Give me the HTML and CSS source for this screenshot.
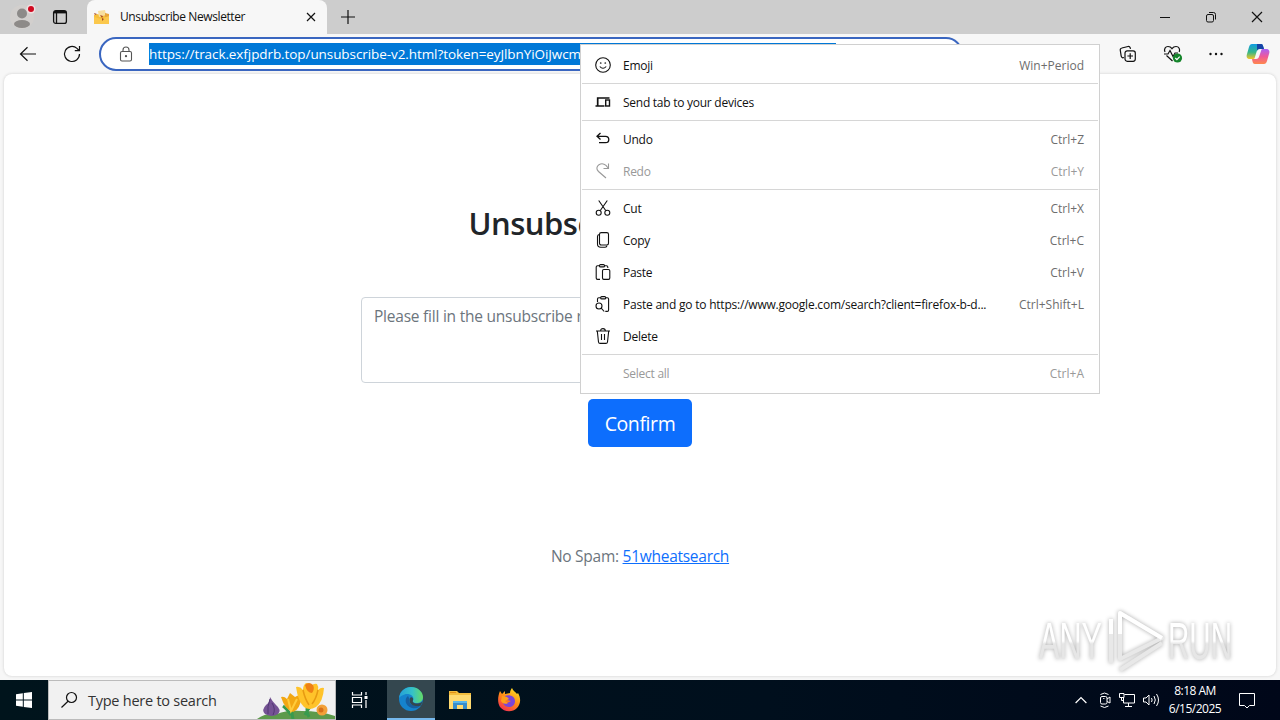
FILE: index.html
```html
<!DOCTYPE html>
<html lang="en">
<head>
  <meta charset="UTF-8" />
  <meta name="viewport" content="width=device-width, initial-scale=1.0" />
  <title>Unsubscribe Newsletter</title>
  <link rel="stylesheet" href="styles.css">
</head>
<body>
  <div class="desktop">
    <header class="tabstrip">
      <svg class="profile" width="24" height="24" viewBox="0 0 24 24">
        <circle cx="12" cy="12" r="12" fill="#d2cfcd"/>
        <circle cx="12" cy="8.500" r="5" fill="#8d8a88"/>
        <ellipse cx="12" cy="19" rx="8" ry="4" fill="#8d8a88"/>
        <circle cx="21" cy="4" r="4.500" fill="#f0dfdf"/>
        <circle cx="21" cy="4" r="3" fill="#d00a20"/>
      </svg>
      <svg class="workspaces" width="16" height="16" viewBox="0 0 16 16" fill="none" stroke="#111" stroke-width="1.300">
        <rect x="1.600" y="1.600" width="12.800" height="12.800" rx="2.200"/>
        <path d="M2 3.200h12" stroke-width="2.400"/><path d="M4.500 4v10"/>
      </svg>
      <div class="tab">
        <svg width="18" height="16" viewBox="0 0 18 16">
          <path d="M1 6l3-1 4 1h8v9H1z" fill="#f5bf3c"/>
          <path d="M5 2l7-1 1 5-7 2z" fill="#f8dfa0"/>
          <path d="M12 4l4 1v3h-4z" fill="#e9a63c"/>
          <path d="M1 8l7 2 8-3v8H1z" fill="#fbc84c"/>
          <path d="M7 6l3 1-1 2zM9 9l2 1-2 2zM1 4l3 1-2 1z" fill="#a84826"/>
        </svg>
        <span class="tab-title">Unsubscribe Newsletter</span>
        <svg class="tab-close" width="10" height="10" viewBox="0 0 10 10" stroke="#111" stroke-width="1.200"><path d="M1 1l8 8M9 1L1 9"/></svg>
      </div>
      <svg class="new-tab" width="14" height="14" viewBox="0 0 14 14" stroke="#111" stroke-width="1.200"><path d="M7 0v14M0 7h14"/></svg>
      <div class="window-buttons">
        <svg width="12" height="12" viewBox="0 0 12 12" fill="none" stroke="#111"><path d="M1 6.500h10"/></svg>
        <svg width="12" height="12" viewBox="0 0 12 12" fill="none" stroke="#111"><rect x="1.500" y="3.500" width="7" height="7.500" rx="1.500"/><path d="M4 1.500h4.500a2 2 0 0 1 2 2V8.500"/></svg>
        <svg width="12" height="12" viewBox="0 0 12 12" fill="none" stroke="#111" stroke-width="1.200"><path d="M1 1l10 10M11 1L1 11"/></svg>
      </div>
    </header>

    <div class="toolbar">
      <svg class="back" width="18" height="16" viewBox="0 0 18 16" fill="none" stroke="#111" stroke-width="1.200"><path d="M17 8H1.500M8.500 1.200L1.500 8l7 6.800"/></svg>
      <svg class="reload" width="18" height="18" viewBox="0 0 18 18" fill="none" stroke="#111" stroke-width="1.200"><path d="M16.500 9A7.500 7.500 0 1 1 14 3.400l2 2.100M16.500 1v4.700h-4.700"/></svg>
      <div class="address">
        <svg width="14" height="16" viewBox="0 0 14 16" fill="none" stroke="#555" stroke-width="1.100"><rect x="1.500" y="5.500" width="11" height="9.500" rx="1.500"/><path d="M4 5.500V4a3 3 0 0 1 6 0v1.500"/><circle cx="7" cy="10.200" r=".6" fill="#444"/></svg>
        <span class="url">https://track.exfjpdrb.top/unsubscribe-v2.html?token=eyJlbnYiOiJwcm</span>
      </div>
      <div class="toolbar-actions">
        <svg width="18" height="18" viewBox="0 0 18 18" fill="none" stroke="#111" stroke-width="1.200">
          <path d="M5 12.500l-1.300.3a2 2 0 0 1-1.500-1.600L1.300 5.500A2 2 0 0 1 2.900 3L9 1.500a2 2 0 0 1 2.200 1.300l.3 1"/>
          <rect x="6" y="5.800" width="10.300" height="10.500" rx="2.200"/><path d="M11.200 8.300v5.600M8.400 11h5.600"/>
        </svg>
        <svg width="20" height="18" viewBox="0 0 20 18" fill="none" stroke="#111" stroke-width="1.200">
          <path d="M2 7C.6 4 2.500 1.500 5 1.500c2 0 3.200 1 4 2.200C10 2.300 11.300 1.500 13 1.500c3 0 4.300 3 3.200 5.500M3.500 10.500l6 5.500M1 9h4l2-3.500 3 6L12 8h3"/>
          <circle cx="14.500" cy="13" r="4.600" fill="#15852b" stroke="none"/><path d="M12.300 13l1.600 1.600 2.800-3" stroke="#fff"/>
        </svg>
        <svg width="14" height="4" viewBox="0 0 14 4" fill="#111"><circle cx="1.500" cy="2" r="1.200"/><circle cx="7" cy="2" r="1.200"/><circle cx="12.500" cy="2" r="1.200"/></svg>
        <svg class="copilot" width="24" height="22" viewBox="0 0 24 22">
          <defs>
            <linearGradient id="cool" x2="0" y2="1"><stop stop-color="#109ce3"/><stop offset=".55" stop-color="#36b788"/><stop offset="1" stop-color="#f5c525"/></linearGradient>
            <linearGradient id="warm" x2="0" y2="1"><stop stop-color="#aa61f5"/><stop offset=".5" stop-color="#ef5999"/><stop offset="1" stop-color="#ff884c"/></linearGradient>
          </defs>
          <path d="M6 1h9c2 0 2 2 3 5h-4c-2 0-3 1-3.500 3L9 14c-.5 2-1 2-3 2H4c-3 0-4-2-3-5l2-7c.6-2 1.500-3 3-3z" fill="url(#cool)"/>
          <path d="M18 21H9c-2 0-2.500-2-3-5h4c2 0 2.700-1 3.300-3L15 8c.5-2 1-2 3-2h2c3 0 4 2 3 5l-2 7c-.6 2-1.500 3-3 3z" fill="url(#warm)"/>
          <path d="M11 1h4c2 0 2 2 3 5h-4c-2 0-2.500.5-3 2z" fill="#1743a7"/>
        </svg>
      </div>
    </div>

    <main class="page">
      <h1>Unsubscribe Newsletter</h1>
      <div class="reason">Please fill in the unsubscribe reason</div>
      <button class="confirm">Confirm</button>
      <p class="note">No Spam: <a href="#">51wheatsearch</a></p>
    </main>

    <footer class="taskbar">
      <div class="start">
        <svg width="16" height="16" viewBox="0 0 16 16" fill="#fff"><path d="M0 2.200l6.800-1v6.300H0zM7.800 1L16 0v7.500H7.800zM0 8.500h6.800v6.300l-6.800-1zM7.800 8.500H16V16l-8.200-1z"/></svg>
      </div>
      <div class="search">
        <svg width="18" height="18" viewBox="0 0 18 18" fill="none" stroke="#111" stroke-width="1.200"><circle cx="10.500" cy="6.500" r="5"/><path d="M7 10.300L.5 16.500"/></svg>
        <span>Type here to search</span>
        <svg class="flowers" width="80" height="38" viewBox="0 0 80 38">
          <path d="M2 38q8-6 20-5 10-4 25-3 18 0 33 5v3z" fill="#5d9a4b"/>
          <path d="M38 38q-2-8 0-13M54 36q-4-8 0-14M50 34q6-12 12-14M36 34q-5-7-8-9" stroke="#389a4e" stroke-width="3" fill="none"/>
          <path d="M15 16q2 4 6 8 6 5 2 9-6 4-13 0-4-4 1-9 4-3 4-8z" fill="#755394"/>
          <path d="M15 18q-3 8-2 15M17 22q4 6 1 12" stroke="#533875" fill="none"/>
          <path d="M26 16q3-1 6 2l3-6 5 4q4-3 7-1-2 14-9 16-8-2-12-15z" fill="#f2a713"/>
          <path d="M33 18l3 12 6-12" stroke="#ffcb3a" stroke-width="2" fill="none"/>
          <path d="M41 6q4-1 7 3 0-5 3-7 4 0 5 3 3-3 6-2 2 3 1 6 3-3 6-2-1 14-8 19-7 4-12 0-6-6-8-20z" fill="#ffc32a"/>
          <path d="M48 9q2 9 6 15M63 9q-2 9-6 14" stroke="#e79a12" stroke-width="1.500" fill="none"/>
          <path d="M50 4q4-4 8 0 2 4-1 8-5 0-7-8z" fill="#ee8015"/>
          <circle cx="67" cy="29" r="5.500" fill="#f2a039"/><circle cx="66" cy="29" r="2.500" fill="#d77019"/>
        </svg>
      </div>
      <div class="app task-view">
        <svg width="18" height="18" viewBox="0 0 18 18" fill="none" stroke="#fff" stroke-width="1.200"><path d="M1.500 1v3h9V1M1.500 17v-3h9v3M1.500 6.500h9v5h-9zM15 1v3M15 9v8"/><path d="M13.500 6.500h3" stroke-width="3"/></svg>
      </div>
      <div class="app active">
        <svg width="24" height="24" viewBox="0 0 24 24">
          <defs><linearGradient id="wave"><stop stop-color="#249fd8"/><stop offset=".55" stop-color="#35c1c9"/><stop offset="1" stop-color="#65dc65"/></linearGradient></defs>
          <circle cx="12" cy="12" r="12" fill="#1583cd"/>
          <path d="M0 11C1 4 6 0 12 0c7 0 12 5 12 10 0 4-3 6-6.500 6-3 0-4.500-1-3.500-2.700C16 9 10 6 5.500 7.500 3 8.300 1 9.500 0 11z" fill="url(#wave)"/>
          <path d="M9 9c-4 3-3 10 4 12 4 1 7-.5 9-3-5 2-13 .5-12-7z" fill="#175e9f"/>
          <path d="M14 13.300c-1 2 1 3.200 4 3.200 3 0 5-1 6-3l-2 5c-5 1.500-12 0-11.500-6 .2-2 1.500-2.500 2.500-2 1.200.5 1.500 1.700 1 2.800z" fill="#34474f"/>
        </svg>
      </div>
      <div class="app">
        <svg width="22" height="20" viewBox="0 0 22 20"><path d="M0 1h8l2 2h12v16H0z" fill="#f3bd3d"/><path d="M0 5h22v14H0z" fill="#ffda70"/><path d="M1 2h6v1H1z" fill="#e29116"/><path d="M4 19v-8h14v8h-4v-4H8v4z" fill="#378dcb"/><path d="M4 11h14v2H4z" fill="#57b6ec"/></svg>
      </div>
      <div class="app">
        <svg width="24" height="24" viewBox="0 0 24 24">
          <defs><linearGradient id="fire" x1=".8" y1="0" x2=".2" y2="1"><stop stop-color="#ffe226"/><stop offset=".5" stop-color="#ff8a16"/><stop offset="1" stop-color="#f32856"/></linearGradient></defs>
          <path d="M3 3l2 3 3-3v3l5-1c0-2 1-4 2-5 1 3 4 4 5 6l1-1c3 5 3 11-1 15-5 5-13 4-17-1C0 14 1 8 3 3z" fill="url(#fire)"/>
          <path d="M8 8c4-2 10 0 10 5 0 4-3 6-6 6-4 0-6-3-6-5l4 1 4-2-4-1z" fill="#7b45d7"/>
          <path d="M5 8l5 1 2 2-4 2 3 2c-3 2-6 0-7-2z" fill="#ff9f1a"/>
        </svg>
      </div>
      <div class="tray">
        <svg class="caret" width="12" height="8" viewBox="0 0 12 8" fill="none" stroke="#fff" stroke-width="1.200"><path d="M.6 7L6 1.500 11.400 7"/></svg>
        <svg width="12" height="16" viewBox="0 0 12 16" fill="none" stroke="#fff"><rect x="1.500" y="4.500" width="6.500" height="7.500" rx="1.500"/><path d="M8 7l3-2v6L8 9.500M1.500 2.500Q5.500-.5 9.500 2.500M1.500 14Q5.500 17 9.500 14"/><path d="M4 6.500h1.500" stroke-width=".8"/></svg>
        <svg width="16" height="16" viewBox="0 0 16 16" fill="none" stroke="#fff"><path d="M5.500 2.500h10v8.500H4.500V6M9.500 11v3M6 14.500h7M.5 1.500h4.500v4H.5zM2.500 5.500v3h2"/></svg>
        <svg width="17" height="14" viewBox="0 0 17 14" fill="none" stroke="#fff"><path d="M.5 5h2.500l3-3v10L3 9H.5zM8.500 5q1.300 2 0 4M11 3q2.600 4 0 8M13.500 1q4 6 0 12"/></svg>
        <div class="clock"><span>8:18 AM</span><span>6/15/2025</span></div>
        <svg class="notice" width="16" height="16" viewBox="0 0 16 16" fill="none" stroke="#fff"><path d="M.5.500h15v12h-5L8 15l-2.500-2.500h-5z"/></svg>
      </div>
    </footer>

    <div class="context-menu">
      <div class="item">
        <svg viewBox="0 0 16 16"><circle cx="8" cy="8" r="7.300"/><path d="M4.800 9.500q3.200 3.600 6.400 0"/><circle cx="5.700" cy="6" r=".3"/><circle cx="10.300" cy="6" r=".3"/></svg>
        <span>Emoji</span><kbd>Win+Period</kbd>
      </div>
      <hr>
      <div class="item">
        <svg viewBox="0 0 16 16"><path d="M2.700 11.500V4h11.800M.5 12h9" stroke-width="1.700"/><rect x="10.700" y="6" width="3.800" height="6" stroke-width="1.400"/></svg>
        <span>Send tab to your devices</span>
      </div>
      <hr>
      <div class="item">
        <svg viewBox="0 0 16 16"><path d="M5.500 2L2 5.300l3.500 3.200M2 5.300h8.500q3.300 0 3.300 3.200t-3.300 3.200H4" stroke-width="1.300"/></svg>
        <span>Undo</span><kbd>Ctrl+Z</kbd>
      </div>
      <div class="item disabled">
        <svg viewBox="0 0 16 16"><path d="M13.500.5v5H8.500M13.500 5.500L11 2.400Q7.500-.6 4 1.700 0 5 3.500 8.500L11 15"/></svg>
        <span>Redo</span><kbd>Ctrl+Y</kbd>
      </div>
      <hr>
      <div class="item">
        <svg viewBox="0 0 16 16"><circle cx="3.700" cy="12.700" r="2.500"/><circle cx="12.300" cy="12.700" r="2.500"/><path d="M3.700.5l7 10M12.300.5l-7 10"/></svg>
        <span>Cut</span><kbd>Ctrl+X</kbd>
      </div>
      <div class="item">
        <svg viewBox="0 0 16 16"><rect x="4.500" y=".6" width="9" height="12.400" rx="1.700"/><path d="M4.300 2.500Q2.500 2.600 2.500 4.500V12q0 3.200 3.200 3.200h4.500q1.500 0 1.800-1.500"/></svg>
        <span>Copy</span><kbd>Ctrl+C</kbd>
      </div>
      <div class="item">
        <svg viewBox="0 0 16 16"><path d="M5 15.400H2.500q-1.300 0-1.300-1.300V3q0-1.300 1.300-1.300h2M9.500 1.700h2q1.300 0 1.300 1.300v1"/><rect x="4.500" y=".6" width="5" height="2.300" rx="1"/><rect x="7.500" y="5.500" width="7.300" height="9.900" rx="1.300"/></svg>
        <span>Paste</span><kbd>Ctrl+V</kbd>
      </div>
      <div class="item">
        <svg viewBox="0 0 16 16"><path d="M2.500 6V3q0-1.300 1.300-1.300h2M10.800 1.700h1.500q1.300 0 1.300 1.300v11q0 1.400-1.300 1.400h-2"/><rect x="5.700" y=".6" width="5" height="2.300" rx="1"/><circle cx="4" cy="10" r="3"/><path d="M6.200 12.200l3 3.300"/></svg>
        <span class="paste-url">Paste and go to https://www.google.com/search?client=firefox-b-d...</span><kbd>Ctrl+Shift+L</kbd>
      </div>
      <div class="item">
        <svg viewBox="0 0 16 16"><path d="M1 3h14M5.700 2.800q0-2.200 2.300-2.200t2.300 2.200M2.300 3l1.200 11q.2 1.400 1.600 1.400h5.800q1.400 0 1.600-1.400L13.700 3M6.500 6v6M9.500 6v6"/></svg>
        <span>Delete</span>
      </div>
      <hr>
      <div class="item disabled">
        <svg viewBox="0 0 16 16"></svg>
        <span>Select all</span><kbd>Ctrl+A</kbd>
      </div>
    </div>

    <svg class="watermark" width="204" height="72" viewBox="0 0 204 72">
      <defs><linearGradient id="fade" x2="0" y2="1"><stop offset=".5" stop-color="#fff"/><stop offset=".55" stop-color="#e6e6e6"/></linearGradient></defs>
      <g fill="url(#fade)">
        <text x="5" y="55" textLength="63" lengthAdjust="spacingAndGlyphs">ANY</text>
        <text x="134" y="55" textLength="64" lengthAdjust="spacingAndGlyphs">RUN</text>
      </g>
      <g fill="none" stroke-linejoin="round" stroke="#fff" stroke-width="4">
        <path d="M77 15v44M86 9v46l42-21zM86 66l42-27" stroke="#e8e8e8"/>
        <path d="M77 30V15M86 30V9l42 25"/>
      </g>
    </svg>
  </div>
</body>
</html>
```
FILE: styles.css
```css
* {
  box-sizing: border-box;
}
body {
  margin: 0;
  font-family: "Open Sans", "Noto Sans", sans-serif;
  color: #111;
}
svg {
  flex: none;
  overflow: visible;
}
.desktop {
  position: relative;
  width: 1280px;
  height: 720px;
  overflow: hidden;
  display: flex;
  flex-direction: column;
  background: #f7f7f7;
}

/* browser frame */
.tabstrip {
  height: 34px;
  display: flex;
  align-items: center;
  background: #cdcdcd;
  padding-left: 10px;
}
.workspaces {
  margin-left: 18px;
}
.tab {
  width: 240px;
  height: 34px;
  margin-left: 19px;
  padding: 0 11px 0 6px;
  display: flex;
  align-items: center;
  background: #f7f7f7;
  border-radius: 8px 8px 0 0;
}
.tab-title {
  margin: -1px 0 0 9px;
  font-size: 12px;
  letter-spacing: -0.4px;
  white-space: nowrap;
}
.tab-close {
  margin-left: auto;
}
.new-tab {
  margin-left: 14px;
}
.window-buttons {
  margin: 0 17px 0 auto;
  display: flex;
  gap: 34px;
}
.toolbar {
  height: 40px;
  display: flex;
  align-items: center;
  padding: 0 10px 0 19px;
}
.reload {
  margin-left: 26px;
}
.address {
  width: 864px;
  height: 34px;
  margin-left: 18px;
  padding-left: 18px;
  display: flex;
  align-items: center;
  background: #fff;
  border: 2px solid #3a66c0;
  border-radius: 17px;
}
.url {
  width: 687px;
  height: 22px;
  margin-left: 16px;
  background: #0078d7;
  color: #fff;
  font-size: 13.5px;
  line-height: 22px;
  letter-spacing: -0.08px;
  white-space: nowrap;
}
.toolbar-actions {
  margin-left: auto;
  display: flex;
  align-items: center;
  gap: 26px;
}
.copilot {
  margin-left: -3px;
}

/* unsubscribe form */
.page {
  height: 602px;
  margin: 0 4px;
  display: flex;
  flex-direction: column;
  align-items: center;
  background: #fff;
  border-radius: 8px;
  box-shadow: 0 0 3px #ccc;
}
h1 {
  width: 343px;
  margin: 130px 0 0;
  color: #212529;
  font-size: 31px;
  font-weight: 600;
  line-height: 38px;
  letter-spacing: -0.5px;
  white-space: nowrap;
}
.reason {
  width: 558px;
  height: 86px;
  margin-top: 55px;
  padding: 6px 12px;
  border: 1px solid #ced4da;
  border-radius: 4px;
  color: #6c757d;
  font-size: 15.5px;
  line-height: 24px;
  letter-spacing: -0.23px;
}
.confirm {
  width: 104px;
  height: 48px;
  margin-top: 16px;
  padding: 0;
  border: none;
  border-radius: 5px;
  background: #0d6efd;
  color: #fff;
  font: 19.5px "Open Sans", sans-serif;
  letter-spacing: -0.4px;
}
.note {
  margin: 97px 0 0;
  color: #6c757d;
  font-size: 15.5px;
  line-height: 24px;
  letter-spacing: -0.27px;
}
.note a {
  color: #0d6efd;
}

/* windows taskbar */
.taskbar {
  height: 40px;
  margin-top: 4px;
  display: flex;
  background: linear-gradient(90deg, #00141c, #000f1d 60%, #000719);
}
.start, .app {
  width: 48px;
  display: flex;
  align-items: center;
  justify-content: center;
}
.search {
  width: 288px;
  padding-left: 12px;
  display: flex;
  align-items: center;
  background: #f1f1f1;
  border: 1px solid #bbb;
  color: #333;
  font-size: 14.5px;
  letter-spacing: -0.25px;
  overflow: hidden;
}
.search span {
  margin-left: 9px;
  white-space: nowrap;
}
.flowers {
  margin-left: auto;
}
.app {
  margin-right: 1px;
}
.task-view {
  margin-right: 3px;
}
.active {
  background: #34474f;
  border-bottom: 2px solid #76b9ed;
}
.tray {
  margin-left: auto;
  padding-right: 25px;
  display: flex;
  align-items: center;
  gap: 8px;
  color: #fff;
}
.caret {
  margin-right: 4px;
}
.clock {
  width: 54px;
  margin-left: 0;
  display: flex;
  flex-direction: column;
  align-items: center;
  font-size: 12px;
  line-height: 18px;
  letter-spacing: -0.5px;
  white-space: nowrap;
}
.notice {
  margin: 2px 0 0 9px;
}

/* address bar menu */
.context-menu {
  position: absolute;
  left: 580px;
  top: 44px;
  width: 520px;
  height: 350px;
  padding: 4px 1px;
  background: #fff;
  border: 1px solid #d0d0d0;
  font-size: 12px;
  letter-spacing: -0.26px;
}
.item {
  height: 32px;
  padding: 0 14px 0 13px;
  display: flex;
  align-items: center;
  white-space: nowrap;
}
.item svg {
  width: 16px;
  height: 16px;
  margin-right: 12px;
  fill: none;
  stroke: #111;
  stroke-width: 1.1;
}
.paste-url {
  letter-spacing: -0.22px;
}
.item kbd {
  margin-left: auto;
  font-family: inherit;
  font-size: 12px;
  letter-spacing: 0;
  color: #6d6d6d;
}
.disabled, .disabled kbd {
  color: #999;
}
.disabled svg {
  stroke: #999;
}
hr {
  height: 1px;
  margin: 2px 0;
  border: none;
  background: #d6d6d6;
}

.watermark {
  position: absolute;
  left: 1034px;
  top: 604px;
  font: 52px "Liberation Sans", sans-serif;
  filter: drop-shadow(0 0 2px #aaa);
}
```
